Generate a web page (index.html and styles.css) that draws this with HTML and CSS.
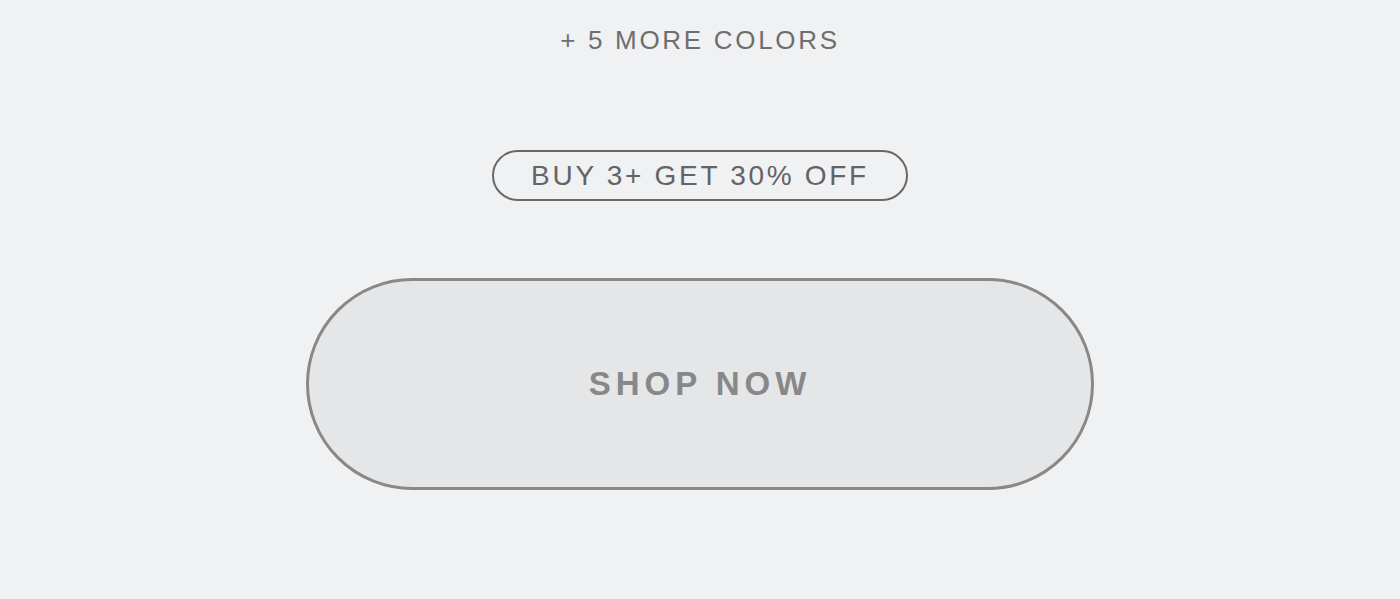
FILE: index.html
```html
<!DOCTYPE html>
<html lang="en">

<head>
    <meta charset="UTF-8">
    <meta name="viewport" content="width=device-width, initial-scale=1.0">
    <title>Shop</title>
    <link rel="stylesheet" href="styles.css">
</head>

<body>
    <div class="product-cta">
        <p class="more-colors">+ 5 MORE COLORS</p>
        <span class="promo">BUY 3+ GET 30% OFF</span>
        <button class="shop-btn">SHOP NOW</button>
    </div>
</body>

</html>
```

FILE: styles.css
```css
body {
    font-family: 'Liberation Sans', Arial, sans-serif;
    background-color: rgb(240, 241, 243);
    margin: 0;
}

.product-cta {
    display: flex;
    flex-direction: column;
    align-items: center;
    padding-top: 24px;
}

.more-colors {
    margin: 0;
    font-size: 26px;
    line-height: 32px;
    letter-spacing: 2.7px;
    color: rgb(110, 110, 110);
}

.promo {
    margin-top: 94px;
    box-sizing: border-box;
    width: 416px;
    height: 51px;
    display: flex;
    align-items: center;
    justify-content: center;
    border: 2px solid rgb(104, 104, 104);
    border-radius: 26px;
    font-size: 28px;
    letter-spacing: 2.7px;
    color: rgb(100, 100, 100);
}

.shop-btn {
    margin-top: 77px;
    box-sizing: border-box;
    width: 788px;
    height: 212px;
    background-color: rgb(229, 230, 232);
    border: 3px solid rgb(136, 136, 136);
    border-radius: 106px;
    font-family: inherit;
    font-size: 33px;
    font-weight: bold;
    letter-spacing: 5px;
    color: rgb(136, 136, 136);
    cursor: pointer;
}
```
